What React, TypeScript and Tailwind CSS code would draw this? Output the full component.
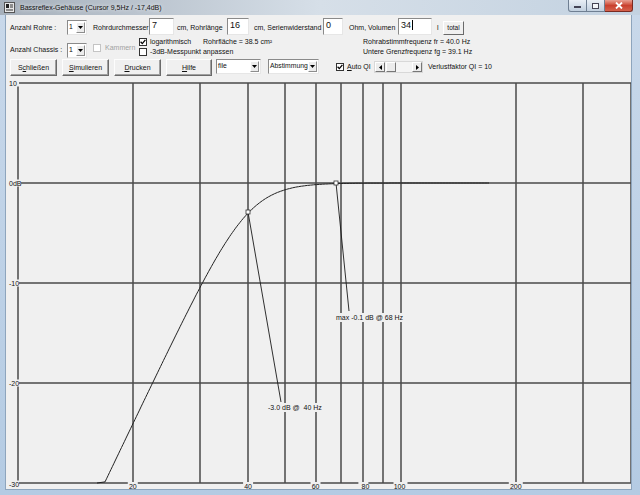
import React from "react";

const X = (f: number) => 16.5 + 383 * Math.log10(f / 10);
const Y = (db: number) => 184 - db * 10;

function responseDb(f: number) {
  return -10 * Math.log10(1 + Math.pow(40 / f, 8));
}

function curvePoints() {
  const pts: string[] = ["96,484"];
  for (let x = 104; x <= 489; x += 1.5) {
    const f = 10 * Math.pow(10, (x - 16.5) / 383);
    const y = Math.min(484, Y(responseDb(f)));
    pts.push(`${x.toFixed(1)},${y.toFixed(1)}`);
  }
  return pts.join(" ");
}

function Field({ w, value, caret }: { w: number; value: string; caret?: boolean }) {
  return (
    <div
      style={{ width: w }}
      className="h-[17px] shrink-0 bg-white border border-t-[#8a8a8a] border-l-[#8a8a8a] border-b-[#e6e6e6] border-r-[#e6e6e6] pl-[2px] text-[9px] leading-[13px] flex items-start"
    >
      <span>{value}</span>
      {caret && <span className="ml-[1px] mt-[1px] w-px h-[10px] bg-black" />}
    </div>
  );
}

function Select({ w, value, h = 15 }: { w: number; value: string; h?: number }) {
  return (
    <div
      style={{ width: w, height: h }}
      className="shrink-0 bg-white border border-t-[#8a8a8a] border-l-[#8a8a8a] border-b-[#e6e6e6] border-r-[#e6e6e6] flex items-stretch"
    >
      <span className="flex-1 pl-[1px] text-[6.8px] leading-[12px] overflow-hidden whitespace-nowrap">{value}</span>
      <div className="w-[9px] my-[1px] mr-[1px] bg-[#ececec] border border-t-white border-l-white border-b-[#8d8d8d] border-r-[#8d8d8d] flex items-center justify-center shrink-0">
        <svg width="5" height="3" viewBox="0 0 5 3">
          <path d="M0 0h5L2.5 3z" fill="#000" />
        </svg>
      </div>
    </div>
  );
}

function Check({ checked, disabled }: { checked?: boolean; disabled?: boolean }) {
  return (
    <div
      className={`w-[8px] h-[8px] shrink-0 bg-white border flex items-center justify-center ${
        disabled ? "border-[#c4c4c4]" : "border-[#333]"
      }`}
    >
      {checked && (
        <svg width="6" height="6" viewBox="0 0 6 6">
          <path d="M0.6 2.8 L2.3 4.6 L5.4 0.9" stroke="#000" strokeWidth="1.3" fill="none" />
        </svg>
      )}
    </div>
  );
}

function Btn({ w, children }: { w: number; children: React.ReactNode }) {
  return (
    <div
      style={{ width: w }}
      className="h-[17px] shrink-0 bg-[#f0f0f0] border border-t-[#fdfdfd] border-l-[#fdfdfd] border-b-[#6a6a6a] border-r-[#6a6a6a] shadow-[inset_-1px_-1px_0_#a0a0a0] flex items-center justify-center text-[7px]"
    >
      {children}
    </div>
  );
}

function Chart() {
  const vFreqs = [20, 30, 40, 50, 60, 70, 80, 90, 100, 200, 300];
  const hLines = [84, 184, 284, 384, 484];
  const left = 17;
  const right = 630;
  const yLabels: [string, number][] = [
    ["10", 84],
    ["0dB", 184],
    ["-10", 284],
    ["-20", 384],
    ["-30", 485],
  ];
  const xLabels: [string, number][] = [
    ["20", 20],
    ["40", 40],
    ["60", 60],
    ["80", 80],
    ["100", 100],
    ["200", 200],
  ];
  const grid = "#4a4a4a";
  return (
    <svg width="627" height="413" className="block" style={{ fontFamily: "'Liberation Sans', Arial, sans-serif" }}>
      <g transform="translate(-5,-77)">
        {hLines.map((y) => (
          <line key={y} x1={left} x2={right} y1={y} y2={y} stroke={grid} strokeWidth="1.5" />
        ))}
        <line x1={left} x2={left} y1={84} y2={484} stroke={grid} strokeWidth="1.5" />
        <line x1={right} x2={right} y1={84} y2={484} stroke={grid} strokeWidth="1.5" />
        {vFreqs.map((f) => (
          <line key={f} x1={Math.round(X(f))} x2={Math.round(X(f))} y1={84} y2={484} stroke={grid} strokeWidth="1.5" />
        ))}

        <polyline points={curvePoints()} fill="none" stroke="#222" strokeWidth="1" />

        <line x1={247} y1={213} x2={280} y2={403} stroke="#1a1a1a" strokeWidth="0.9" />
        <line x1={335} y1={184} x2={348} y2={312} stroke="#1a1a1a" strokeWidth="0.9" />
        <rect x={245} y={211} width={4} height={4} fill="#fff" stroke="#333" strokeWidth="0.8" />
        <rect x={333} y={182} width={4} height={4} fill="#fff" stroke="#333" strokeWidth="0.8" />

        <rect x={266} y={404} width={56} height={9} fill="#f0f0f0" />
        <text x={267} y={410.5} fontSize="7" fill="#111">
          -3.0 dB @&#160; 40 Hz
        </text>
        <rect x={334} y={314} width={67} height={9} fill="#f0f0f0" />
        <text x={335} y={320.5} fontSize="7" fill="#111">
          max -0.1 dB @ 68 Hz
        </text>

        {yLabels.map(([t, y]) => (
          <g key={t}>
            <rect x={8} y={y - 3.5} width={t === "0dB" ? 12 : 10} height={7} fill="#f0f0f0" />
            <text x={8} y={y + 2.5} fontSize="7" fill="#111">
              {t}
            </text>
          </g>
        ))}
        {xLabels.map(([t, f]) => (
          <g key={t}>
            <rect x={X(f) - t.length * 2 - 1} y={483} width={t.length * 4 + 2} height={8} fill="#f0f0f0" />
            <text x={X(f) + (f === 80 ? 2 : f === 100 ? -1 : 0)} y={489.5} fontSize="7" fill="#111" textAnchor="middle">
              {t}
            </text>
          </g>
        ))}
      </g>
    </svg>
  );
}

function TitleBar() {
  return (
    <div className="h-[15px] shrink-0 flex items-start bg-gradient-to-r from-[#a6b0bb] via-[#d6dfe8] to-[#c3d2e1]">
      <svg width="11" height="11" viewBox="0 0 11 11" className="ml-[4px] mt-[2px]">
        <rect x="0.5" y="0.5" width="10" height="10" fill="#e8e8e8" stroke="#555" />
        <rect x="2" y="2" width="3" height="4" fill="#222" />
        <path d="M6 3h3M6 5h3M2 8h7" stroke="#333" strokeWidth="1" />
      </svg>
      <span className="ml-[5px] mt-[3px] text-[7px] leading-[9px] text-[#111] [text-shadow:0_0_4px_#fff]">
        Bassreflex-Gehäuse (Cursor 9,5Hz / -17,4dB)
      </span>
      <div className="flex-1" />
      <div className="flex mr-[7px]">
        <div className="w-[19px] h-[12px] rounded-bl-[3px] border border-t-0 border-[#6f7f92] bg-gradient-to-b from-[#e9eff6] to-[#c2d0df] flex items-end justify-center pb-[3px]">
          <div className="w-[7px] h-[2px] bg-white border border-[#445]" />
        </div>
        <div className="w-[18px] h-[12px] border border-t-0 border-l-0 border-[#6f7f92] bg-gradient-to-b from-[#e9eff6] to-[#c2d0df] flex items-center justify-center">
          <div className="w-[7px] h-[6px] border border-[#445] bg-white/70" />
        </div>
        <div className="w-[28px] h-[12px] rounded-br-[3px] border border-t-0 border-l-0 border-[#7a2b22] bg-gradient-to-b from-[#e8a093] via-[#c9402e] to-[#d5614c] flex items-center justify-center">
          <svg width="8" height="7" viewBox="0 0 8 7">
            <path d="M1 0.5L7 6.5M7 0.5L1 6.5" stroke="#fff" strokeWidth="1.8" />
          </svg>
        </div>
      </div>
    </div>
  );
}

export default function App() {
  return (
    <div
      className="w-[640px] h-[495px] flex flex-col overflow-hidden bg-[#b5cde6] text-[7px] leading-[10px] text-[#111]"
      style={{ fontFamily: "'Liberation Sans', Arial, sans-serif" }}
    >
      <TitleBar />
      <div className="flex-1 flex min-h-0 pl-[5px] pr-[8px] pb-[5px] bg-gradient-to-b from-[#c8d8ea] to-[#b4cbe3]">
        <div className="flex-1 flex flex-col bg-[#f0f0f0] border-l border-r border-b border-[#8ea5bd] min-w-0">
          {/* row 1 */}
          <div className="flex items-end h-[17px] mt-[3px] pl-[4px]">
            <span className="w-[57px] shrink-0 self-center mt-[3px]">Anzahl Rohre :</span>
            <Select w={20} value="1" />
            <span className="w-[56px] shrink-0 ml-[6px] self-center mt-[3px]">Rohrdurchmesser</span>
            <Field w={25} value="7" />
            <span className="w-[50px] shrink-0 ml-[3px] self-center mt-[3px]">cm, Rohrlänge</span>
            <Field w={22} value="16" />
            <span className="w-[69px] shrink-0 ml-[5px] self-center mt-[3px]">cm, Serienwiderstand</span>
            <Field w={20} value="0" />
            <span className="w-[49px] shrink-0 ml-[6px] self-center mt-[3px]">Ohm, Volumen</span>
            <Field w={34} value="34" caret />
            <span className="w-[6px] shrink-0 ml-[5px] self-center mt-[3px]">l</span>
            <div className="w-[21px] h-[14px] shrink-0 bg-[#f0f0f0] border border-t-white border-l-white border-b-[#6a6a6a] border-r-[#6a6a6a] flex items-center justify-center text-[6.5px]">
              total
            </div>
          </div>

          {/* row 2 */}
          <div className="flex items-end h-[21px] mt-[2px] pl-[4px]">
            <span className="w-[57px] shrink-0 mb-[3px]">Anzahl Chassis :</span>
            <Select w={20} value="1" />
            <div className="w-[46px] shrink-0 ml-[6px] mb-[5px] flex items-center gap-[4px] text-[#a2a2a2]">
              <Check disabled />
              <span>Kammern</span>
            </div>
            <div className="w-[224px] shrink-0 self-stretch flex flex-col">
              <div className="h-[10px] flex items-center">
                <Check checked />
                <span className="ml-[3px] w-[53px] shrink-0">logarithmisch</span>
                <span>Rohrfläche = 38.5 cm²</span>
              </div>
              <div className="h-[10px] flex items-center">
                <Check />
                <span className="ml-[3px]">-3dB-Messpunkt anpassen</span>
              </div>
            </div>
            <div className="self-stretch flex flex-col">
              <div className="h-[10px] flex items-center">Rohrabstimmfrequenz fr = 40.0 Hz</div>
              <div className="h-[10px] flex items-center">Untere Grenzfrequenz fg = 39.1 Hz</div>
            </div>
          </div>

          {/* row 3 */}
          <div className="flex items-start h-[17px] mt-[1px] pl-[4px]">
            <Btn w={47}>
              S<span className="underline">c</span>hließen
            </Btn>
            <div className="ml-[5px]">
              <Btn w={47}>
                <span className="underline">S</span>imulieren
              </Btn>
            </div>
            <div className="ml-[5px]">
              <Btn w={47}>
                <span className="underline">D</span>rucken
              </Btn>
            </div>
            <div className="ml-[5px]">
              <Btn w={46}>
                <span className="underline">H</span>ilfe
              </Btn>
            </div>
            <div className="ml-[4px]">
              <Select w={45} value="file" />
            </div>
            <div className="ml-[7px]">
              <Select w={51} value="Abstimmung" />
            </div>
            <div className="ml-[17px] mt-[2px] flex items-center h-[12px]">
              <Check checked />
              <span className="ml-[3px] w-[27px]">
                <span className="underline">A</span>uto QI
              </span>
            </div>
            <div className="mt-[2px] w-[49px] h-[12px] flex bg-[#f4f4f4] border border-[#d8d8d8]">
              <div className="w-[10px] border border-t-white border-l-white border-b-[#777] border-r-[#777] bg-[#ececec] flex items-center justify-center">
                <svg width="3" height="5" viewBox="0 0 3 5">
                  <path d="M3 0v5L0 2.5z" fill="#000" />
                </svg>
              </div>
              <div className="w-[10px] ml-[1px] border border-t-white border-l-white border-b-[#777] border-r-[#777] bg-[#ececec]" />
              <div className="flex-1" />
              <div className="w-[10px] border border-t-white border-l-white border-b-[#777] border-r-[#777] bg-[#ececec] flex items-center justify-center">
                <svg width="3" height="5" viewBox="0 0 3 5">
                  <path d="M0 0v5L3 2.5z" fill="#000" />
                </svg>
              </div>
            </div>
            <span className="ml-[5px] mt-[3px]">Verlustfaktor QI = 10</span>
          </div>

          <div className="flex-1 min-h-0 overflow-hidden">
            <Chart />
          </div>
        </div>
      </div>
    </div>
  );
}
